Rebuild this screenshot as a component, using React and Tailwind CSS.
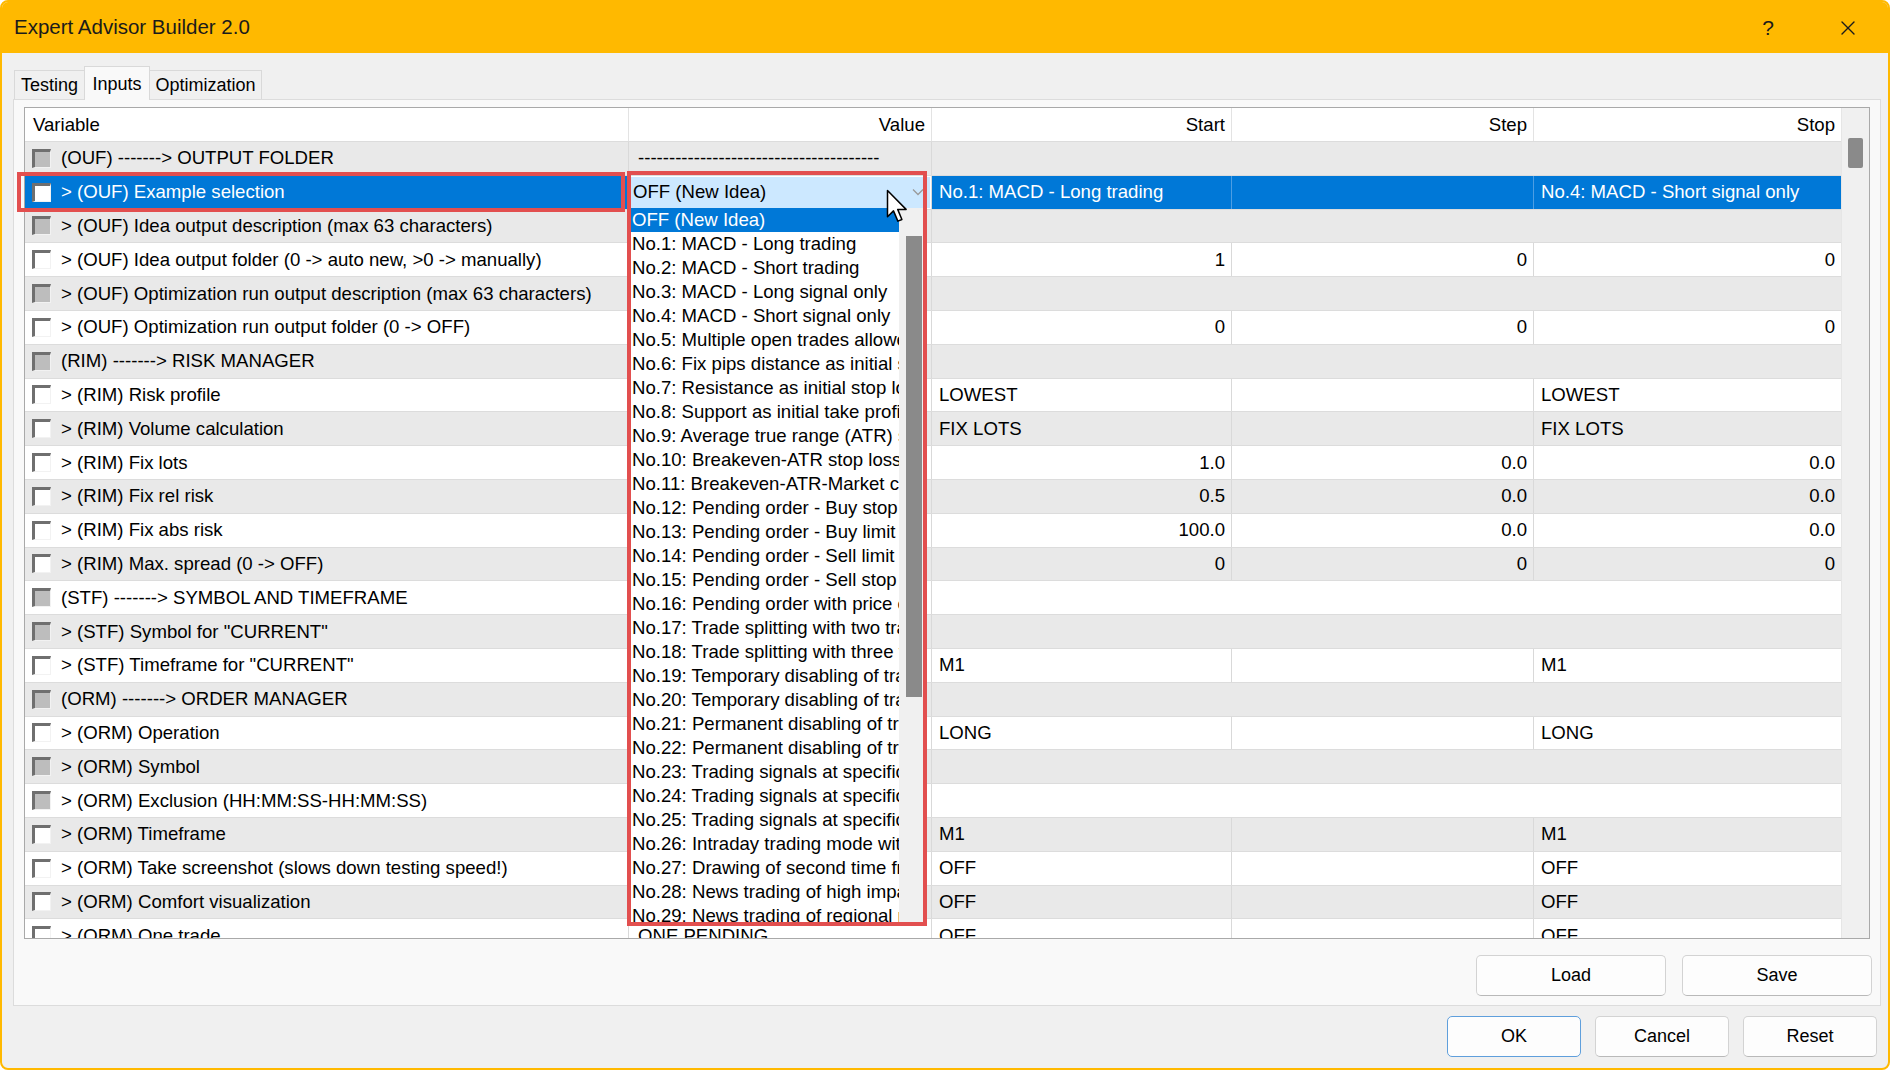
import React from "react";
import { X } from "lucide-react";

const rows = [
  { label: "(OUF) -------> OUTPUT FOLDER", dis: true, value: "---------------------------------------" },
  { label: "> (OUF) Example selection", selected: true, start: "No.1: MACD - Long trading", stop: "No.4: MACD - Short signal only" },
  { label: "> (OUF) Idea output description (max 63 characters)", dis: true },
  { label: "> (OUF) Idea output folder (0 -> auto new, >0 -> manually)", start: "1", step: "0", stop: "0", num: true },
  { label: "> (OUF) Optimization run output description (max 63 characters)", dis: true },
  { label: "> (OUF) Optimization run output folder (0 -> OFF)", start: "0", step: "0", stop: "0", num: true },
  { label: "(RIM) -------> RISK MANAGER", dis: true },
  { label: "> (RIM) Risk profile", start: "LOWEST", stop: "LOWEST" },
  { label: "> (RIM) Volume calculation", start: "FIX LOTS", stop: "FIX LOTS" },
  { label: "> (RIM) Fix lots", start: "1.0", step: "0.0", stop: "0.0", num: true },
  { label: "> (RIM) Fix rel risk", start: "0.5", step: "0.0", stop: "0.0", num: true },
  { label: "> (RIM) Fix abs risk", start: "100.0", step: "0.0", stop: "0.0", num: true },
  { label: "> (RIM) Max. spread (0 -> OFF)", start: "0", step: "0", stop: "0", num: true },
  { label: "(STF) -------> SYMBOL AND TIMEFRAME", dis: true },
  { label: '> (STF) Symbol for "CURRENT"', dis: true },
  { label: '> (STF) Timeframe for "CURRENT"', start: "M1", stop: "M1" },
  { label: "(ORM) -------> ORDER MANAGER", dis: true },
  { label: "> (ORM) Operation", start: "LONG", stop: "LONG" },
  { label: "> (ORM) Symbol", dis: true },
  { label: "> (ORM) Exclusion (HH:MM:SS-HH:MM:SS)", dis: true },
  { label: "> (ORM) Timeframe", start: "M1", stop: "M1" },
  { label: "> (ORM) Take screenshot (slows down testing speed!)", start: "OFF", stop: "OFF" },
  { label: "> (ORM) Comfort visualization", start: "OFF", stop: "OFF" },
  { label: "> (ORM) One trade", value: "ONE PENDING", start: "OFF", stop: "OFF" },
];

const examples = [
  "OFF (New Idea)",
  "No.1: MACD - Long trading",
  "No.2: MACD - Short trading",
  "No.3: MACD - Long signal only",
  "No.4: MACD - Short signal only",
  "No.5: Multiple open trades allowed",
  "No.6: Fix pips distance as initial stop loss",
  "No.7: Resistance as initial stop loss",
  "No.8: Support as initial take profit",
  "No.9: Average true range (ATR) stop loss",
  "No.10: Breakeven-ATR stop loss",
  "No.11: Breakeven-ATR-Market close",
  "No.12: Pending order - Buy stop",
  "No.13: Pending order - Buy limit",
  "No.14: Pending order - Sell limit",
  "No.15: Pending order - Sell stop",
  "No.16: Pending order with price offset",
  "No.17: Trade splitting with two trades",
  "No.18: Trade splitting with three trades",
  "No.19: Temporary disabling of trading",
  "No.20: Temporary disabling of trading",
  "No.21: Permanent disabling of trading",
  "No.22: Permanent disabling of trading",
  "No.23: Trading signals at specific times",
  "No.24: Trading signals at specific days",
  "No.25: Trading signals at specific dates",
  "No.26: Intraday trading mode with close",
  "No.27: Drawing of second time frame",
  "No.28: News trading of high impact",
  "No.29: News trading of regional news",
];

const CheckBox = ({ on }) => (
  <div
    className={`w-[19px] h-[19px] shrink-0 border-t-[3px] border-l-[3px] border-r border-b border-t-[#6f6f6f] border-l-[#6f6f6f] border-r-[#f2f2f2] border-b-[#f2f2f2] ${
      on ? "bg-white" : "bg-[#bdbdbd]"
    }`}
  />
);

const Cell = ({ w, text, num, line }) => (
  <div
    className={`${w} h-full flex items-center whitespace-nowrap ${line} ${
      num ? "justify-end pr-[6px]" : "pl-[7px]"
    }`}
  >
    {text}
  </div>
);

const Row = ({ r, i }) => {
  const sel = r.selected;
  const bg = sel ? "bg-[#0078d7] text-white" : i % 2 === 0 ? "bg-[#e9e9e9]" : "bg-white";
  const line = sel ? "border-r border-r-[#4d9ee3]" : "border-r border-r-[#d9d9d9]";

  return (
    <div className={`flex h-[33.8px] shrink-0 border-b border-b-[#dcdcdc] ${bg}`}>
      <div className={`w-[604px] h-full flex items-center pl-[7px] gap-[10px] ${line}`}>
        <CheckBox on={!r.dis} />
        <span className="whitespace-nowrap">{r.label}</span>
      </div>
      <div
        className={`w-[303px] h-full flex items-center whitespace-nowrap border-r border-r-[#d9d9d9] ${
          sel ? "bg-white p-[1px]" : "pl-[9px]"
        }`}
      >
        {sel ? (
          <div className="w-full h-full bg-[#cce8ff] text-black flex items-center pl-[3px] pr-[6px]">
            <span>OFF (New Idea)</span>
            <svg className="ml-auto" width="12" height="8" viewBox="0 0 12 8">
              <path d="M1 1.5 L6 6.5 L11 1.5" fill="none" stroke="#9a9a9a" strokeWidth="1.3" />
            </svg>
          </div>
        ) : (
          r.value
        )}
      </div>
      {r.dis ? (
        <div className="w-[909px] h-full" />
      ) : (
        <>
          <Cell w="w-[300px]" text={r.start} num={r.num} line={line} />
          <Cell w="w-[302px]" text={r.step} num={r.num} line={line} />
          <Cell w="w-[307px]" text={r.stop} num={r.num} line="" />
        </>
      )}
    </div>
  );
};

const Button = ({ w, children, primary }) => (
  <div
    className={`${w} h-[41px] flex items-center justify-center rounded-[5px] bg-[#fdfdfd] border ${
      primary ? "border-[#5f9fdc]" : "border-[#d3d3d3] border-b-[#b9b9b9]"
    }`}
  >
    {children}
  </div>
);

export default function App() {
  return (
    <div className="relative w-[1890px] h-[1071px] bg-white overflow-hidden font-['Liberation_Sans',Arial,sans-serif] text-[18px] text-black">
      {/* window */}
      <div className="h-[1070px] rounded-[8px] border-2 border-[#ffb900] bg-[#f0f0f0] flex flex-col overflow-hidden">
        {/* title bar */}
        <div className="h-[51px] shrink-0 bg-[#ffb900] flex items-center pl-[12px] pr-[20px]">
          <span className="text-[20.5px] text-[#1b1b1b]">Expert Advisor Builder 2.0</span>
          <div className="ml-auto w-[40px] flex justify-center text-[21px] text-[#1b1b1b]">?</div>
          <div className="ml-[40px] w-[40px] flex justify-center">
            <X size={24} strokeWidth={1.4} color="#1b1b1b" />
          </div>
        </div>

        {/* tabs */}
        <div className="flex items-end pl-[12px] pt-[13px]">
          <div className="w-[70px] h-[29px] flex items-center justify-center border-t border-l border-[#d9d9d9]">Testing</div>
          <div className="relative z-10 -mb-px w-[66px] h-[34px] flex items-start pt-[4px] justify-center bg-[#f9f9f9] border-t border-x border-[#d9d9d9]">
            Inputs
          </div>
          <div className="w-[112px] h-[29px] flex items-center justify-center border-t border-r border-[#d9d9d9]">Optimization</div>
        </div>

        {/* tab panel */}
        <div className="ml-[11px] w-[1868px] h-[907px] shrink-0 border border-[#dcdcdc] bg-[#f9f9f9] flex flex-col">
          <div className="ml-[10px] mt-[7px] w-[1846px] h-[832px] shrink-0 border border-[#a9a9a9] bg-white flex text-[18.6px]">
            <div className="w-[1816px] h-full flex flex-col overflow-hidden">
              {/* header */}
              <div className="flex h-[34px] shrink-0 border-b border-b-[#dcdcdc] bg-white">
                <div className="w-[604px] flex items-center pl-[8px] border-r border-r-[#e3e3e3]">Variable</div>
                <div className="w-[303px] flex items-center justify-end pr-[6px] border-r border-r-[#e3e3e3]">Value</div>
                <div className="w-[300px] flex items-center justify-end pr-[6px] border-r border-r-[#e3e3e3]">Start</div>
                <div className="w-[302px] flex items-center justify-end pr-[6px] border-r border-r-[#e3e3e3]">Step</div>
                <div className="w-[307px] flex items-center justify-end pr-[6px]">Stop</div>
              </div>
              {rows.map((r, i) => (
                <Row key={i} r={r} i={i} />
              ))}
            </div>
            {/* scrollbar */}
            <div className="w-[28px] h-full bg-[#f0f0f0] border-l border-l-[#e6e6e6]">
              <div className="mt-[30px] ml-[6px] w-[15px] h-[30px] rounded-[2px] bg-[#8a8a8a]" />
            </div>
          </div>

          <div className="mt-[16px] flex justify-end gap-[16px] pr-[8px]">
            <Button w="w-[190px]">Load</Button>
            <Button w="w-[190px]">Save</Button>
          </div>
        </div>

        {/* dialog buttons */}
        <div className="mt-[10px] flex justify-end gap-[14px] pr-[11px]">
          <Button w="w-[134px]" primary>
            OK
          </Button>
          <Button w="w-[134px]">Cancel</Button>
          <Button w="w-[134px]">Reset</Button>
        </div>
      </div>

      {/* open dropdown list */}
      <div className="absolute left-[631px] top-[208px] w-[292px] h-[714px] bg-white flex overflow-hidden text-[18.6px]">
        <div className="w-[268px] h-full flex flex-col overflow-hidden">
          {examples.map((e, i) => (
            <div
              key={i}
              className={`h-[24px] shrink-0 leading-[24px] whitespace-nowrap pl-[1px] ${
                i === 0 ? "bg-[#0078d7] text-white" : ""
              }`}
            >
              {e}
            </div>
          ))}
        </div>
        <div className="w-[24px] h-full bg-[#f0f0f0]">
          <div className="mt-[28px] ml-[7px] w-[16px] h-[461px] bg-[#8a8a8a]" />
        </div>
      </div>

      {/* red highlight frames */}
      <div className="absolute left-[17px] top-[172px] w-[608px] h-[40px] border-[4px] border-[#e24f4f] pointer-events-none" />
      <div className="absolute left-[627px] top-[171px] w-[300px] h-[755px] border-[4px] border-[#e24f4f] pointer-events-none" />

      {/* mouse cursor */}
      <svg className="absolute left-[886px] top-[189px]" width="24" height="36" viewBox="0 0 16 24">
        <path
          d="M1 1 L1 18.5 L5 14.6 L7.9 21.4 L10.6 20.3 L7.8 13.6 L13.4 13.6 Z"
          fill="white"
          stroke="black"
          strokeWidth="1"
          strokeLinejoin="round"
        />
      </svg>
    </div>
  );
}
